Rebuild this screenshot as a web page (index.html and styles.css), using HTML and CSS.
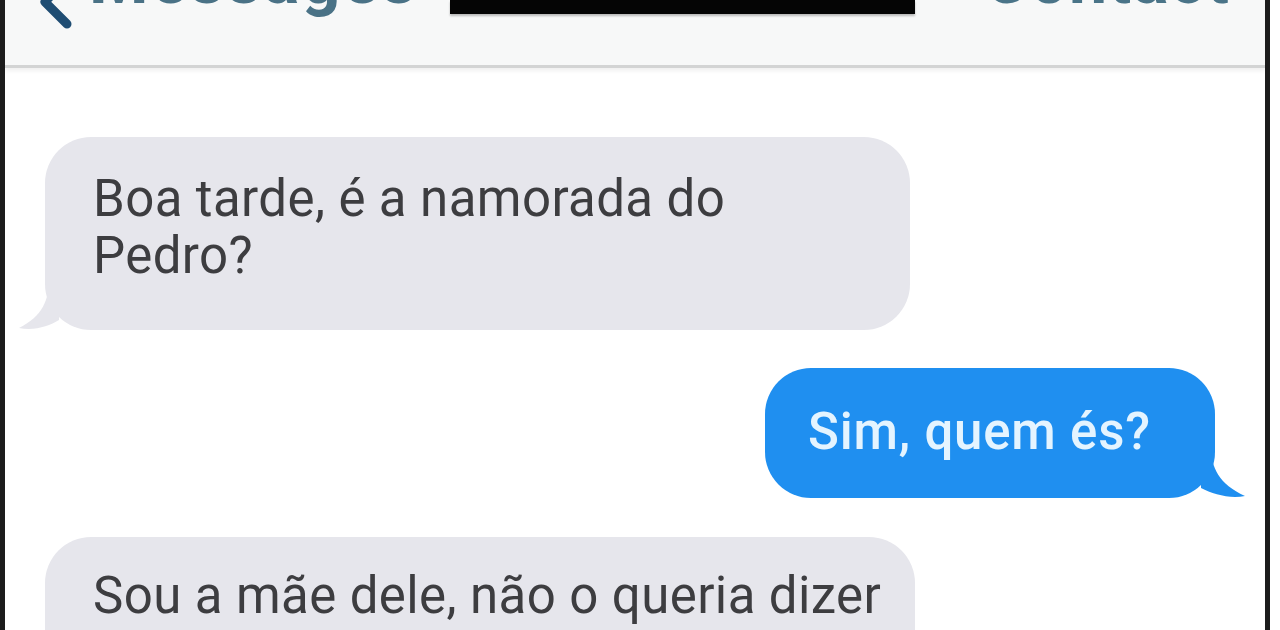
FILE: index.html
```html
<!DOCTYPE html>
<html lang="pt">
<head>
<meta charset="utf-8">
<title>Mensagens</title>
<link rel="stylesheet" href="styles.css">
</head>
<body>
<div class="screen">
  <div class="phone">
    <header class="nav">
      <div class="nav-back">
        <svg class="chevron" width="40" height="40" viewBox="0 0 40 40" aria-hidden="true">
          <path d="M32 -24 L8 2 L30 24" fill="none" stroke="#1f4d73" stroke-width="9" stroke-linecap="round" stroke-linejoin="round"/>
        </svg>
        <span class="nav-label">Messages</span>
      </div>
      <div class="redact"></div>
      <span class="nav-label nav-right">Contact</span>
    </header>
    <main class="thread">
      <div class="bubble in first">
        Boa tarde, é a namorada do<br>Pedro?
        <svg class="tail tail-in" width="40" height="52" viewBox="0 0 40 52" aria-hidden="true">
          <path d="M30 0 C30 22 24 38 0 50 C16 53 30 48 40 42 L40 0 Z" fill="#e6e6ec"/>
        </svg>
      </div>
      <div class="bubble out">
        Sim, quem és?
        <svg class="tail tail-out" width="44" height="52" viewBox="0 0 44 52" aria-hidden="true">
          <path d="M10 0 C10 22 18 38 44 50 C28 53 12 48 0 42 L0 0 Z" fill="#1f8ff0"/>
        </svg>
      </div>
      <div class="bubble in last">
        Sou a mãe dele, não o queria dizer
      </div>
    </main>
  </div>
</div>
</body>
</html>
```
FILE: styles.css
```css
* { box-sizing: border-box; }

html, body {
  margin: 0;
  padding: 0;
  background: #ffffff;
}

.screen {
  width: 1280px;
  height: 630px;
  overflow: hidden;
  background: #ffffff;
  padding-right: 10px;
}

.phone {
  width: 1270px;
  height: 630px;
  border-left: 5px solid #1c1c1c;
  border-right: 5px solid #1c1c1c;
  background: #ffffff;
  overflow: hidden;
  font-family: Roboto, "Liberation Sans", Arial, sans-serif;
}

.nav {
  height: 68px;
  background: #f7f8f8;
  border-bottom: 3px solid #d3d4d4;
  box-shadow: 0 3px 4px rgba(0, 0, 0, 0.06);
  display: flex;
  align-items: flex-start;
  padding-left: 32px;
  padding-right: 35px;
}

.nav-back {
  display: flex;
  align-items: flex-start;
}

.chevron {
  display: block;
}

.nav-label {
  font-size: 68px;
  line-height: 68px;
  margin-top: -54px;
  color: #4a7286;
  font-weight: 700;
  letter-spacing: 2px;
  margin-left: 12px;
}

.nav-right {
  margin-left: auto;
  color: #4a7488;
  letter-spacing: 1px;
}

.redact {
  width: 465px;
  height: 14px;
  background: #050505;
  margin-left: 32px;
  box-shadow: 0 2px 2px rgba(0, 0, 0, 0.25);
}

.thread {
  display: flex;
  flex-direction: column;
  align-items: flex-start;
  padding-top: 69px;
}

.bubble {
  position: relative;
  font-size: 51px;
  line-height: 57px;
  letter-spacing: 0.4px;
  border-radius: 46px;
}

.in {
  background: #e6e6ec;
  color: #3d3d40;
  margin-left: 40px;
  padding: 33px 20px 46px 48px;
}

.first {
  width: 865px;
}

.last {
  width: 870px;
  margin-top: 39px;
  padding-top: 30px;
  height: 200px;
  white-space: nowrap;
}

.out {
  align-self: flex-end;
  margin-right: 50px;
  margin-top: 38px;
  width: 450px;
  height: 130px;
  padding: 35px 20px 35px 43px;
  background: #1f8ff0;
  color: #e4f4ff;
  font-weight: 500;
  letter-spacing: 0.8px;
}

.tail {
  position: absolute;
  bottom: 0;
  display: block;
}

.tail-in {
  left: -26px;
}

.tail-out {
  right: -30px;
}
```
